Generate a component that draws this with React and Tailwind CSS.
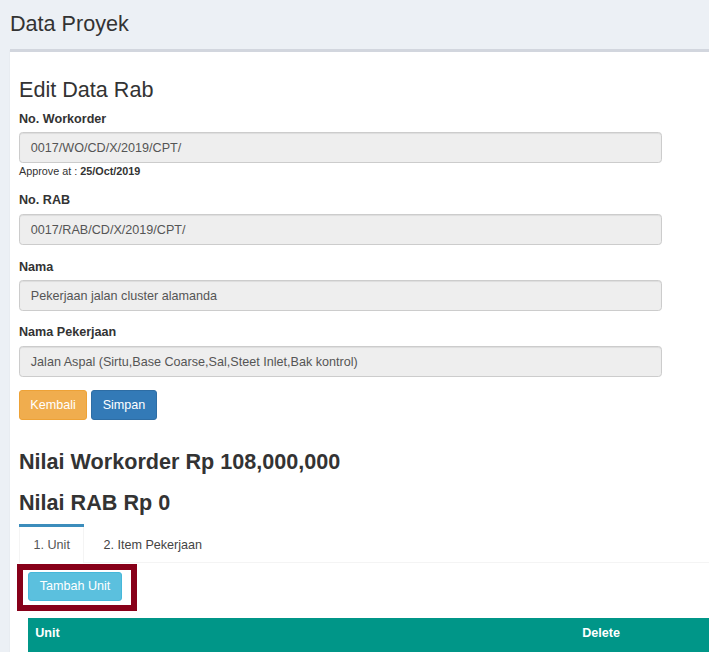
function Label({ children, className = "" }) {
  return (
    <div className={"h-[18px] text-[12.6px] leading-[18px] font-bold text-[#333] " + className}>{children}</div>
  );
}

function Input({ children, className = "" }) {
  return (
    <div
      className={
        "h-[31px] w-[643px] flex items-center px-[10.8px] bg-[#eeeeee] border border-[#cccccc] rounded-[3.6px] text-[12.6px] leading-[18px] text-[#555] shadow-[inset_0_1px_1px_rgba(0,0,0,0.075)] " +
        className
      }
    >
      {children}
    </div>
  );
}

export default function App() {
  return (
    <div className="w-[709px] h-[652px] overflow-hidden bg-[#ecf0f5] font-['Liberation_Sans',Arial,sans-serif] text-[#333]">
      <div className="pl-[10px] pt-[12px] h-[49px]">
        <h1 className="text-[21.6px] leading-[24px] h-[24px] text-[#333]">Data Proyek</h1>
      </div>
      <div className="ml-[10px] w-[760px] h-[603px] bg-white border-t-[3px] border-[#d2d6de] shadow-[0_1px_1px_rgba(0,0,0,0.1)] px-[9px] pt-[26px]">
        <h3 className="text-[21.6px] leading-[24px] h-[24px]">Edit Data Rab</h3>

        <Label className="mt-[8px]">No. Workorder</Label>
        <Input className="mt-[4px]">0017/WO/CD/X/2019/CPT/</Input>
        <p className="mt-[1px] h-[15px] text-[10.8px] leading-[15px] text-[#333]">
          Approve at : <b>25/Oct/2019</b>
        </p>

        <Label className="mt-[12px]">No. RAB</Label>
        <Input className="mt-[5px]">0017/RAB/CD/X/2019/CPT/</Input>

        <Label className="mt-[13px]">Nama</Label>
        <Input className="mt-[4px]">Pekerjaan jalan cluster alamanda</Input>

        <Label className="mt-[12px]">Nama Pekerjaan</Label>
        <Input className="mt-[5px]">Jalan Aspal (Sirtu,Base Coarse,Sal,Steet Inlet,Bak kontrol)</Input>

        <div className="mt-[13px] flex gap-[4px]">
          <button className="h-[30px] w-[68px] flex items-center justify-center bg-[#f0ad4e] border border-[#eea236] rounded-[3px] text-white text-[12.6px]">
            Kembali
          </button>
          <button className="h-[30px] w-[66px] flex items-center justify-center bg-[#337ab7] border border-[#2e6da4] rounded-[3px] text-white text-[12.6px]">
            Simpan
          </button>
        </div>

        <h3 className="mt-[30px] text-[21.6px] leading-[24px] h-[24px] font-bold">Nilai Workorder Rp 108,000,000</h3>
        <h3 className="mt-[17px] text-[21.6px] leading-[24px] h-[24px] font-bold">Nilai RAB Rp 0</h3>

        <div className="mt-[9px]">
          <ul className="flex border-b border-[#f4f4f4]">
            <li className="-mb-px border-t-[3px] border-[#3c8dbc]">
              <div className="h-[36px] px-[13.5px] flex items-center bg-white border-x border-[#f4f4f4] text-[12.6px] text-[#555]">
                1. Unit
              </div>
            </li>
            <li className="-mb-px ml-[4.5px] border-t-[3px] border-transparent">
              <div className="h-[36px] px-[13.5px] flex items-center border-x border-transparent text-[12.6px] text-[#444]">
                2. Item Pekerjaan
              </div>
            </li>
          </ul>
          <div className="pt-[9px] pl-[9px]">
            <div className="relative w-[94px]">
              <button className="h-[29px] w-[94px] flex items-center justify-center bg-[#5bc0de] border border-[#46b8da] rounded-[3px] text-white text-[12.6px]">
                Tambah Unit
              </button>
              <div className="absolute -left-[11px] -top-[8px] -right-[15px] -bottom-[10px] border-[6px] border-[#870019] pointer-events-none"></div>
            </div>
            <div className="mt-[17px] h-[34px] bg-[#009688] flex text-white text-[12.6px] font-bold leading-[18px] pt-[5.5px]">
              <div className="w-[547px] px-[7.2px]">Unit</div>
              <div className="px-[7.2px]">Delete</div>
            </div>
          </div>
        </div>
      </div>
    </div>
  );
}
